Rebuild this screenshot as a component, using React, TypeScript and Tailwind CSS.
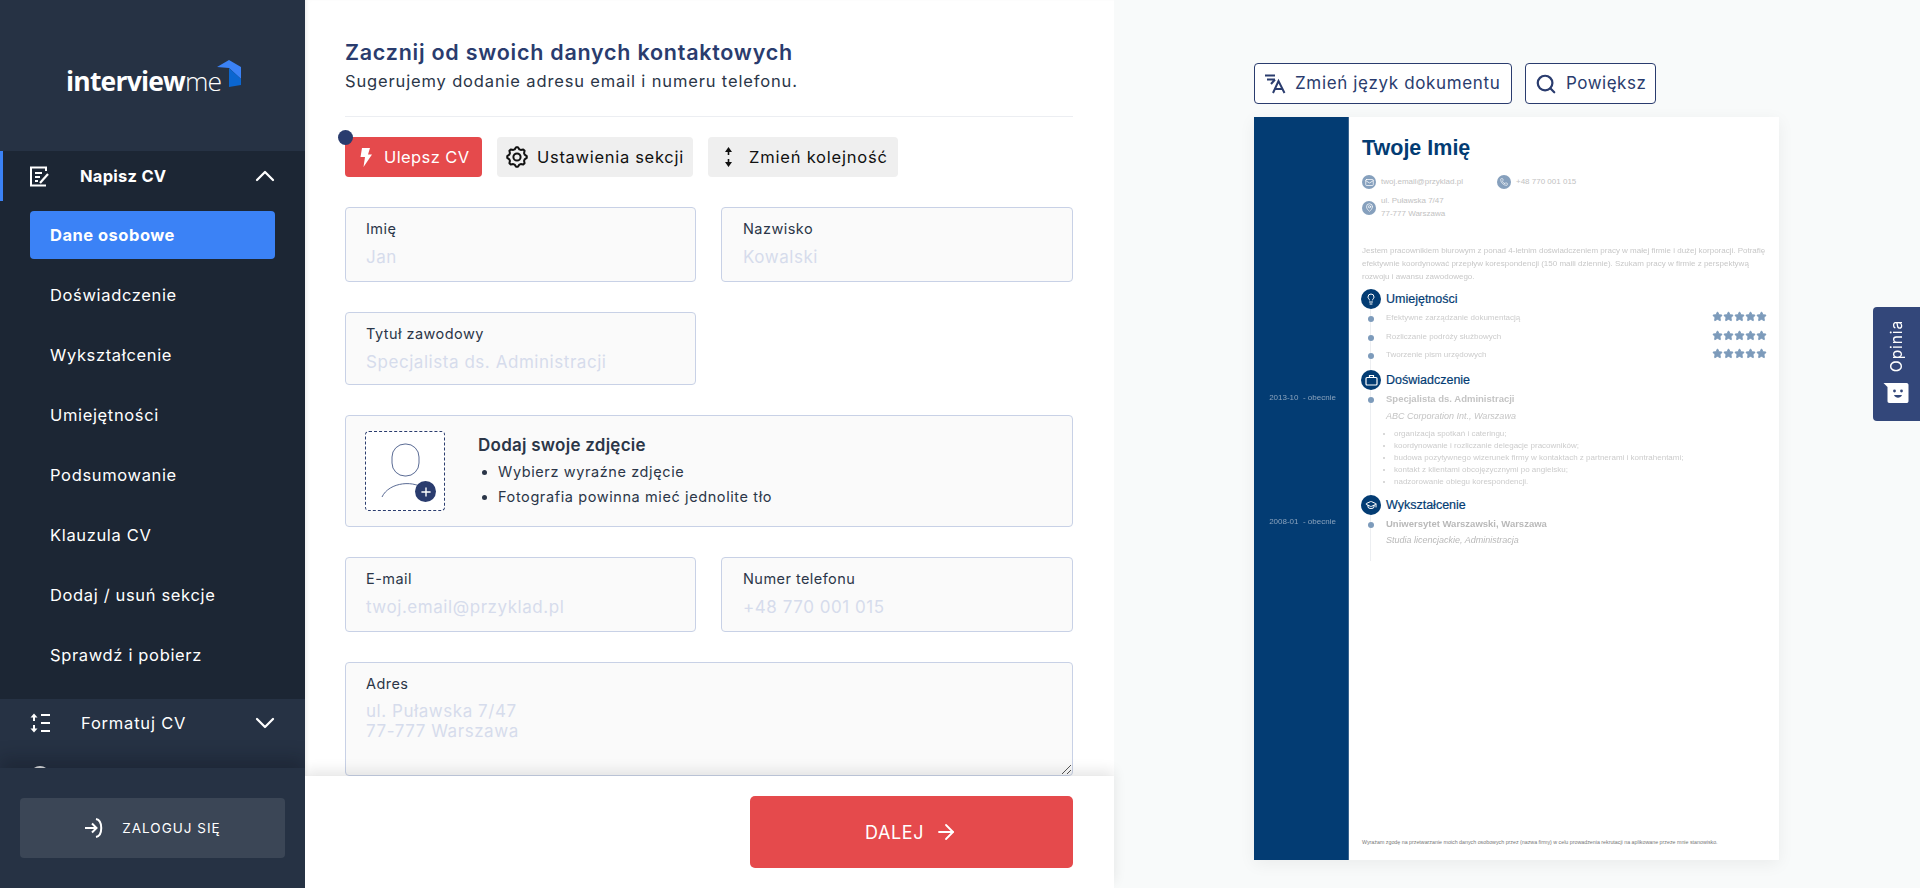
import React from "react";
import { ChevronUp, ChevronDown, Search, ArrowRight, Mail, Phone, MapPin, GraduationCap, Lightbulb, Star, Plus } from "lucide-react";

const menu = ["Doświadczenie", "Wykształcenie", "Umiejętności", "Podsumowanie", "Klauzula CV", "Dodaj / usuń sekcje", "Sprawdź i pobierz"];

function Logo() {
  return (
    <div className="h-[151px] shrink-0 bg-[#263244] flex items-start pl-[66px] pt-[60px]">
      <div className="flex items-start">
        <span className="mt-[2px] text-[26.5px] leading-[38px] tracking-[-0.8px] text-white font-['Open_Sans',sans-serif]">
          <span className="font-bold">interview</span>
          <span className="font-light">me</span>
        </span>
        <svg width="25" height="28" viewBox="0 0 25 28" className="-ml-[4px]">
          <path d="M12 0 L24 7 L24 19 L12 8 L0 7 Z" fill="#3b82f6" />
          <path d="M12 8 L24 19 L24 25 L12 27 Z" fill="#0b66d0" />
        </svg>
      </div>
    </div>
  );
}

function EditIcon() {
  return (
    <svg width="20" height="21" viewBox="0 0 20 21" fill="none" stroke="white" strokeWidth="2">
      <path d="M16 5V1.5H1V19.5H16" />
      <path d="M5 7H12M5 11H10M5 15H8" />
      <path d="M10 17L18 8" strokeWidth="2.2" />
    </svg>
  );
}

function FormatIcon() {
  return (
    <svg width="21" height="20" viewBox="0 0 21 20" fill="white" stroke="white">
      <path d="M4 3V8M4 12V17" strokeWidth="2" />
      <path d="M4 0.5L7.5 4.5H0.5Z M4 19.5L7.5 15.5H0.5Z" stroke="none" />
      <path d="M11 2H20M11 10H20M11 18H20" strokeWidth="2" />
    </svg>
  );
}

function GearIcon() {
  const pts: string[] = [];
  for (let i = 0; i < 32; i++) {
    const seg = i % 4;
    const r = seg === 0 || seg === 1 ? 9.8 : 8;
    const a = (i / 32) * Math.PI * 2 - Math.PI / 32;
    pts.push((11 + r * Math.cos(a)).toFixed(2) + "," + (11 + r * Math.sin(a)).toFixed(2));
  }
  return (
    <svg width="22" height="22" viewBox="0 0 22 22" fill="none" stroke="#111" strokeWidth="2" strokeLinejoin="round">
      <polygon points={pts.join(" ")} />
      <circle cx="11" cy="11" r="3.6" />
    </svg>
  );
}

function SideNav() {
  return (
    <aside className="w-[305px] h-full shrink-0 flex flex-col bg-[#263244] relative z-20 overflow-hidden">
      <Logo />
      <div className="flex-1 overflow-hidden">
        <div className="bg-[#1c2634] pb-[20px]">
          <div className="h-[50px] relative flex items-center pl-[30px] pr-[24px]">
            <div className="absolute left-0 top-0 w-[3px] h-full bg-[#3b82f6]" />
            <EditIcon />
            <span className="ml-[30px] text-[16.5px] tracking-[0.25px] font-bold text-white flex-1">Napisz CV</span>
            <ChevronUp size={32} color="white" strokeWidth={1.7} />
          </div>
          <div className="px-[30px] pt-[10px] flex flex-col gap-[12px]">
            <div className="h-[48px] bg-[#3b82f6] rounded-[4px] flex items-center pl-[20px] text-[16.5px] tracking-[0.5px] font-bold text-white">Dane osobowe</div>
            {menu.map((m) => (
              <div key={m} className="h-[48px] flex items-center pl-[20px] text-[16.5px] tracking-[0.65px] text-white">{m}</div>
            ))}
          </div>
        </div>
        <div className="h-[48px] flex items-center pl-[30px] pr-[24px]">
          <FormatIcon />
          <span className="ml-[30px] text-[16.5px] tracking-[0.8px] text-white flex-1">Formatuj CV</span>
          <ChevronDown size={32} color="white" strokeWidth={1.7} />
        </div>
        <div className="mt-[5px] h-[48px] flex items-center pl-[30px] pr-[32px]">
          <div className="w-[20px] h-[20px] rounded-full border-2 border-white" />
          <span className="ml-[30px] text-[16.5px] tracking-[0.5px] text-white">Pomoc i kontakt</span>
        </div>
      </div>
      <div className="h-[120px] shrink-0 bg-[#263244] px-[20px] pt-[30px] relative z-10 shadow-[0_-10px_16px_rgba(10,15,25,0.28)]">
        <div className="h-[60px] rounded-[4px] bg-[#3b4656] flex items-center justify-center gap-[18px]">
          <svg width="20" height="22" viewBox="0 0 20 22" fill="none" stroke="white" strokeWidth="2">
            <path d="M12 2C19 3.5 19 18.5 12 20" />
            <path d="M1 11H12M8 6.5L12.5 11L8 15.5" />
          </svg>
          <span className="text-[13.5px] tracking-[1px] text-white">ZALOGUJ SIĘ</span>
        </div>
      </div>
    </aside>
  );
}

function Field({ label, value, className = "" }: { label: string; value: string; className?: string }) {
  return (
    <div className={"h-[75px] rounded-[4px] border border-[#c8d1e6] bg-[#fafafa] pt-[11px] " + className}>
      <div className="text-[14.5px] leading-[20px] tracking-[0.45px] text-[#2b3648]">{label}</div>
      <div className="mt-[7px] text-[17px] leading-[22px] tracking-[0.55px] text-[#d6dcec]">{value}</div>
    </div>
  );
}

function Toolbar() {
  return (
    <div className="mt-[20px] flex gap-[15px] relative">
      <div className="absolute -left-[7px] -top-[7px] w-[15px] h-[15px] rounded-full bg-[#2a3c6e] z-10" />
      <div className="h-[40px] w-[137px] rounded-[4px] bg-[#e54a4c] flex items-center pl-[15px] gap-[12px] text-white text-[16.5px] tracking-[0.4px]">
        <svg width="12" height="19" viewBox="0 0 12 19" fill="white">
          <path d="M2 0H10L8 6.5H12L3.5 19L5 9H0.5Z" />
        </svg>
        <span>Ulepsz CV</span>
      </div>
      <div className="h-[40px] w-[196px] rounded-[4px] bg-[#efefef] flex items-center pl-[9px] gap-[9px] text-[#111] text-[16.5px] tracking-[0.7px]">
        <GearIcon />
        <span>Ustawienia sekcji</span>
      </div>
      <div className="h-[40px] w-[190px] rounded-[4px] bg-[#efefef] flex items-center pl-[15px] gap-[15px] text-[#111] text-[16.5px] tracking-[0.8px]">
        <svg width="11" height="22" viewBox="0 0 11 22" fill="#111" stroke="#111">
          <path d="M5.5 4V9M5.5 13V18" strokeWidth="1.6" />
          <path d="M5.5 1L9 6H2ZM5.5 21L9 16H2Z" stroke="none" />
        </svg>
        <span>Zmień kolejność</span>
      </div>
    </div>
  );
}

function PhotoBox() {
  return (
    <div className="mt-[30px] h-[112px] rounded-[4px] border border-[#c8d1e6] bg-[#fafafa] flex pl-[19px] pt-[15px]">
      <div className="w-[80px] h-[80px] rounded-[4px] border border-dashed border-[#2a3c6e] bg-white relative shrink-0">
        <svg width="80" height="80" viewBox="0 0 80 80" fill="none" stroke="#5a6b94" strokeWidth="1" className="absolute -left-px -top-px">
          <rect x="27" y="13" width="27" height="32" rx="13" />
          <path d="M17 66C24 51 50 48 62 60" />
        </svg>
        <div className="absolute left-[49px] top-[49px] w-[21px] h-[21px] rounded-full bg-[#2a3c6e] flex items-center justify-center">
          <Plus size={14} color="white" strokeWidth={2.4} />
        </div>
      </div>
      <div className="ml-[33px] text-[#2b3648]">
        <div className="text-[17px] leading-[24px] tracking-[0.25px] font-semibold mt-[2px]">Dodaj swoje zdjęcie</div>
        <ul className="mt-[2px] text-[14.5px] leading-[25px] tracking-[0.6px] list-disc pl-[20px]">
          <li>Wybierz wyraźne zdjęcie</li>
          <li>Fotografia powinna mieć jednolite tło</li>
        </ul>
      </div>
    </div>
  );
}

function FormPanel() {
  return (
    <main className="w-[809px] h-full shrink-0 bg-white flex flex-col relative z-10">
      <div className="flex-1 overflow-hidden pl-[40px] pr-[41px] pt-[38px] shadow-[inset_4px_0_5px_-3px_rgba(0,0,0,0.1)]">
        <h1 className="text-[21.5px] leading-[28px] tracking-[0.75px] font-semibold text-[#2a3c6e]">Zacznij od swoich danych kontaktowych</h1>
        <p className="mt-[3px] text-[16.5px] leading-[24px] tracking-[0.85px] text-[#2b3648]">Sugerujemy dodanie adresu email i numeru telefonu.</p>
        <div className="mt-[23px] h-px bg-[#eceef2]" />
        <Toolbar />
        <div className="mt-[30px] grid grid-cols-[351px_352px] gap-x-[25px]">
          <Field label="Imię" value="Jan" className="pl-[20px]" />
          <Field label="Nazwisko" value="Kowalski" className="pl-[21px]" />
        </div>
        <div className="mt-[30px] grid grid-cols-[351px_352px] gap-x-[25px]">
          <Field label="Tytuł zawodowy" value="Specjalista ds. Administracji" className="pl-[20px] !h-[73px]" />
        </div>
        <PhotoBox />
        <div className="mt-[30px] grid grid-cols-[351px_352px] gap-x-[25px]">
          <Field label="E-mail" value="twoj.email@przyklad.pl" className="pl-[20px]" />
          <Field label="Numer telefonu" value="+48 770 001 015" className="pl-[21px]" />
        </div>
        <div className="mt-[30px] h-[114px] rounded-[4px] border border-[#c8d1e6] bg-[#fafafa] pl-[20px] pt-[11px] relative">
          <div className="text-[14.5px] leading-[20px] tracking-[0.45px] text-[#2b3648]">Adres</div>
          <div className="mt-[7px] text-[17px] leading-[20px] tracking-[0.55px] text-[#d6dcec]">
            ul. Puławska 7/47
            <br />
            77-777 Warszawa
          </div>
          <svg width="10" height="10" viewBox="0 0 10 10" stroke="#555" strokeWidth="1" className="absolute right-[1px] bottom-[1px]">
            <path d="M1 10L10 1M6 10L10 6" />
          </svg>
        </div>
      </div>
      <div className="h-[112px] shrink-0 bg-white flex justify-end items-start pt-[20px] pr-[41px] relative shadow-[0_-6px_12px_rgba(0,0,0,0.09)]">
        <div className="w-[323px] h-[72px] rounded-[5px] bg-[#e54a4c] flex items-center justify-center gap-[10px] text-white text-[18px] tracking-[0.6px]">
          DALEJ <ArrowRight size={24} strokeWidth={1.8} />
        </div>
      </div>
    </main>
  );
}

function Contact({ icon, children, className = "" }: { icon: React.ReactNode; children: React.ReactNode; className?: string }) {
  return (
    <div className={"flex items-center gap-[5px] text-[8px] leading-[12.5px] text-[#c2c2c2] " + className}>
      <span className="w-[14px] h-[14px] rounded-full bg-[#86a0bd] flex items-center justify-center shrink-0">{icon}</span>
      <span>{children}</span>
    </div>
  );
}

function SectionTitle({ icon, children, className = "" }: { icon: React.ReactNode; children: React.ReactNode; className?: string }) {
  return (
    <div className={"flex items-center gap-[5px] -ml-px " + className}>
      <span className="w-[20px] h-[20px] rounded-full bg-[#033c73] flex items-center justify-center shrink-0 relative z-10">{icon}</span>
      <span className="text-[12.5px] leading-[16px] text-[#033c73] [-webkit-text-stroke:0.2px_#033c73]">{children}</span>
    </div>
  );
}

function Dot() {
  return <span className="absolute left-[6px] top-[5px] w-[6px] h-[6px] rounded-full bg-[#7d9bbb]" />;
}

function Skill({ text }: { text: string }) {
  return (
    <div className="relative h-[18.5px] pl-[24px] pr-[1px] flex justify-between text-[8px] leading-[13px] text-[#cccccc] blur-[0.3px]">
      <Dot />
      <span>{text}</span>
      <span className="flex">
        {[0, 1, 2, 3, 4].map((i) => (
          <Star key={i} size={11} fill="#7d9bbb" color="#7d9bbb" />
        ))}
      </span>
    </div>
  );
}

function Resume() {
  return (
    <div className="mt-[13px] w-[525px] h-[743px] bg-white flex shadow-[0_4px_16px_rgba(0,0,0,0.06)] font-['Liberation_Sans',sans-serif]">
      <div className="w-[95px] h-full bg-[#033c73] border-r border-[#3b658f] pl-[3px] shrink-0 relative text-center text-[8px] text-[#8ba3bd] blur-[0.3px]">
        <div className="pt-[275px] leading-[12px]">2013-10 &nbsp;- obecnie</div>
        <div className="pt-[112px] leading-[12px]">2008-01 &nbsp;- obecnie</div>
      </div>
      <div className="flex-1 pl-[13px] pr-[11px] pt-[17px] relative">
        <div className="absolute left-[21px] top-[190px] h-[254px] w-px bg-[#eceef1]" />
        <h2 className="text-[21.5px] leading-[28px] font-bold text-[#033c73]">Twoje Imię</h2>
        <div className="mt-[13px] flex">
          <Contact className="w-[135px]" icon={<Mail size={9} color="white" />}>twoj.email@przyklad.pl</Contact>
          <Contact icon={<Phone size={8} color="white" />}>+48 770 001 015</Contact>
        </div>
        <Contact className="mt-[6px]" icon={<MapPin size={9} color="white" />}>
          ul. Puławska 7/47
          <br />
          77-777 Warszawa
        </Contact>
        <p className="mt-[24px] text-[8px] leading-[13px] text-[#c8c8c8] blur-[0.2px]">
          Jestem pracownikiem biurowym z ponad 4-letnim doświadczeniem pracy w małej firmie i dużej korporacji. Potrafię efektywnie koordynować przepływ korespondencji (150 maili dziennie). Szukam pracy w firmie z perspektywą rozwoju i awansu zawodowego.
        </p>
        <SectionTitle className="mt-[6px] mb-[2px]" icon={<Lightbulb size={12} color="white" />}>Umiejętności</SectionTitle>
        <Skill text="Efektywne zarządzanie dokumentacją" />
        <Skill text="Rozliczanie podróży służbowych" />
        <Skill text="Tworzenie pism urzędowych" />
        <SectionTitle className="mt-[3px]" icon={
          <svg width="13" height="12" viewBox="0 0 13 12" fill="none" stroke="white" strokeWidth="1.2">
            <rect x="1" y="3.5" width="11" height="7.5" rx="1" />
            <path d="M4.5 3.5V1.5H8.5V3.5" />
          </svg>
        }>Doświadczenie</SectionTitle>
        <div className="relative pl-[24px] blur-[0.3px]">
          <Dot />
          <div className="mt-[2px] text-[9.5px] leading-[14px] font-bold text-[#c4c4c4]">Specjalista ds. Administracji</div>
          <div className="mt-[3px] text-[9px] leading-[14px] italic text-[#c4c4c4]">ABC Corporation Int., Warszawa</div>
          <ul className="mt-[5px] list-disc pl-[8px] text-[8px] leading-[12px] text-[#cccccc]">
            <li>organizacja spotkań i cateringu;</li>
            <li>koordynowanie i rozliczanie delegacje pracowników;</li>
            <li>budowa pozytywnego wizerunek firmy w kontaktach z partnerami i kontrahentami;</li>
            <li>kontakt z klientami obcojęzycznymi po angielsku;</li>
            <li>nadzorowanie obiegu korespondencji.</li>
          </ul>
        </div>
        <SectionTitle className="mt-[7px]" icon={<GraduationCap size={12} color="white" />}>Wykształcenie</SectionTitle>
        <div className="relative pl-[24px] blur-[0.3px]">
          <Dot />
          <div className="mt-[2px] text-[9.5px] leading-[14px] font-bold text-[#b9b9b9]">Uniwersytet Warszawski, Warszawa</div>
          <div className="mt-[2px] text-[9px] leading-[14px] italic text-[#b9b9b9]">Studia licencjackie, Administracja</div>
        </div>
        <div className="absolute left-[13px] bottom-[14px] text-[5.3px] leading-[8px] text-[#777] whitespace-nowrap">
          Wyrażam zgodę na przetwarzanie moich danych osobowych przez (nazwa firmy) w celu prowadzenia rekrutacji na aplikowane przeze mnie stanowisko.
        </div>
      </div>
    </div>
  );
}

function Preview() {
  return (
    <section className="flex-1 h-full bg-[#f8fafa] pl-[140px] pt-[63px] relative">
      <div className="flex gap-[13px]">
        <div className="h-[41px] w-[258px] rounded-[4px] border border-[#2a3c6e] bg-white flex items-center pl-[9px] gap-[9px] text-[17px] tracking-[0.65px] text-[#2a3c6e] whitespace-nowrap">
          <svg width="22" height="22" viewBox="0 0 22 22" fill="none" stroke="#2a3c6e" strokeWidth="2" className="shrink-0">
            <path d="M1 2.5H11M3 6.5H11M11 6.5L7 11" />
            <path d="M9 20L14.5 8L20.5 20M11 16H18.5" />
          </svg>
          <span>Zmień język dokumentu</span>
        </div>
        <div className="h-[41px] w-[131px] rounded-[4px] border border-[#2a3c6e] bg-white flex items-center pl-[9px] gap-[9px] text-[17px] tracking-[0.5px] text-[#2a3c6e]">
          <Search size={22} color="#2a3c6e" strokeWidth={2.4} />
          <span>Powiększ</span>
        </div>
      </div>
      <Resume />
      <div className="absolute right-0 top-[307px] w-[47px] h-[114px] rounded-l-[4px] bg-[#33477a] flex flex-col items-center justify-between pt-[13px] pb-[18px]">
        <span className="text-[15.5px] leading-[18px] tracking-[0.9px] text-white [writing-mode:vertical-rl] rotate-180">Opinia</span>
        <svg width="27" height="20" viewBox="0 0 26 20">
          <path d="M0 0H23C24.5 0 25 1 25 2V18C25 19.5 24 20 23 20H6C4.5 20 4 19 4 18V4Z" fill="white" />
          <circle cx="11" cy="8" r="1.4" fill="#33477a" />
          <circle cx="18" cy="8" r="1.4" fill="#33477a" />
          <path d="M10.5 12C12 15.5 17 15.5 18.5 12Z" fill="#33477a" />
        </svg>
      </div>
    </section>
  );
}

export default function App() {
  return (
    <div className="h-screen w-full flex overflow-hidden font-['Inter',sans-serif]">
      <SideNav />
      <FormPanel />
      <Preview />
    </div>
  );
}
